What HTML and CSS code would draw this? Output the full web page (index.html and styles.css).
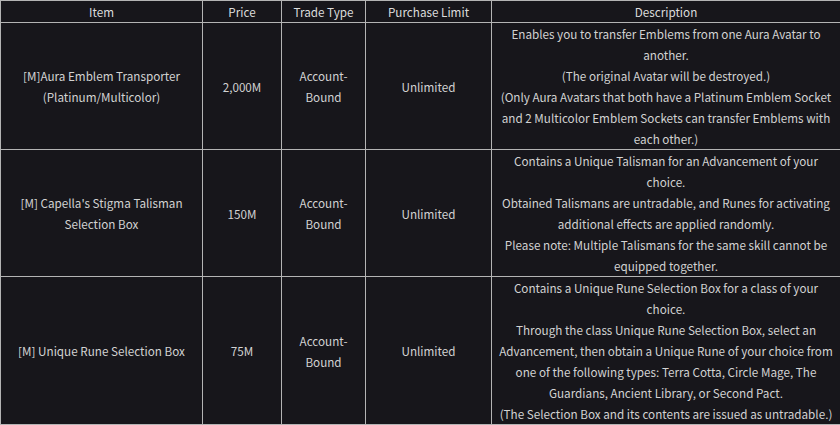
FILE: index.html
```html
<!DOCTYPE html>
<html>
<head>
<meta charset="utf-8">
<link rel="stylesheet" href="styles.css">
</head>
<body>
<table class="shop">
  <colgroup>
    <col class="c-item"><col class="c-price"><col class="c-trade"><col class="c-limit"><col class="c-desc">
  </colgroup>
  <thead>
    <tr><th>Item</th><th>Price</th><th>Trade Type</th><th>Purchase Limit</th><th>Description</th></tr>
  </thead>
  <tbody>
    <tr>
      <td>[M]Aura Emblem Transporter<br>(Platinum/Multicolor)</td>
      <td>2,000M</td>
      <td>Account-<br>Bound</td>
      <td>Unlimited</td>
      <td>Enables you to transfer Emblems from one Aura Avatar to another.<br>(The original Avatar will be destroyed.)<br>(Only Aura Avatars that both have a Platinum Emblem Socket and 2 Multicolor Emblem Sockets can transfer Emblems with each other.)</td>
    </tr>
    <tr>
      <td>[M] Capella's Stigma Talisman<br>Selection Box</td>
      <td>150M</td>
      <td>Account-<br>Bound</td>
      <td>Unlimited</td>
      <td>Contains a Unique Talisman for an Advancement of your choice.<br>Obtained Talismans are untradable, and Runes for activating additional effects are applied randomly.<br>Please note: Multiple Talismans for the same skill cannot be equipped together.</td>
    </tr>
    <tr>
      <td>[M] Unique Rune Selection Box</td>
      <td>75M</td>
      <td>Account-<br>Bound</td>
      <td>Unlimited</td>
      <td>Contains a Unique Rune Selection Box for a class of your choice.<br>Through the class Unique Rune Selection Box, select an Advancement, then obtain a Unique Rune of your choice from one of the following types: Terra Cotta, Circle Mage, The Guardians, Ancient Library, or Second Pact.<br>(The Selection Box and its contents are issued as untradable.)</td>
    </tr>
  </tbody>
</table>
</body>
</html>
```
FILE: styles.css
```css
html, body {
  margin: 0;
  padding: 0;
  background: #17161b;
}
.shop {
  width: 840px;
  border-collapse: collapse;
  table-layout: fixed;
  background: #17161b;
  color: #d2d2d2;
  font-family: "Noto Sans CJK KR", "Noto Sans", sans-serif;
  font-size: 11.7px;
  line-height: 21px;
}
.c-item { width: 202px; }
.c-price { width: 79px; }
.c-trade { width: 84px; }
.c-limit { width: 126px; }
.c-desc { width: 349px; }
.shop th, .shop td {
  border: 1px solid #b4b4b4;
  padding: 0 5px;
  text-align: center;
  vertical-align: middle;
  font-weight: normal;
}
.shop th {
  color: #dcdcdc;
}
```
